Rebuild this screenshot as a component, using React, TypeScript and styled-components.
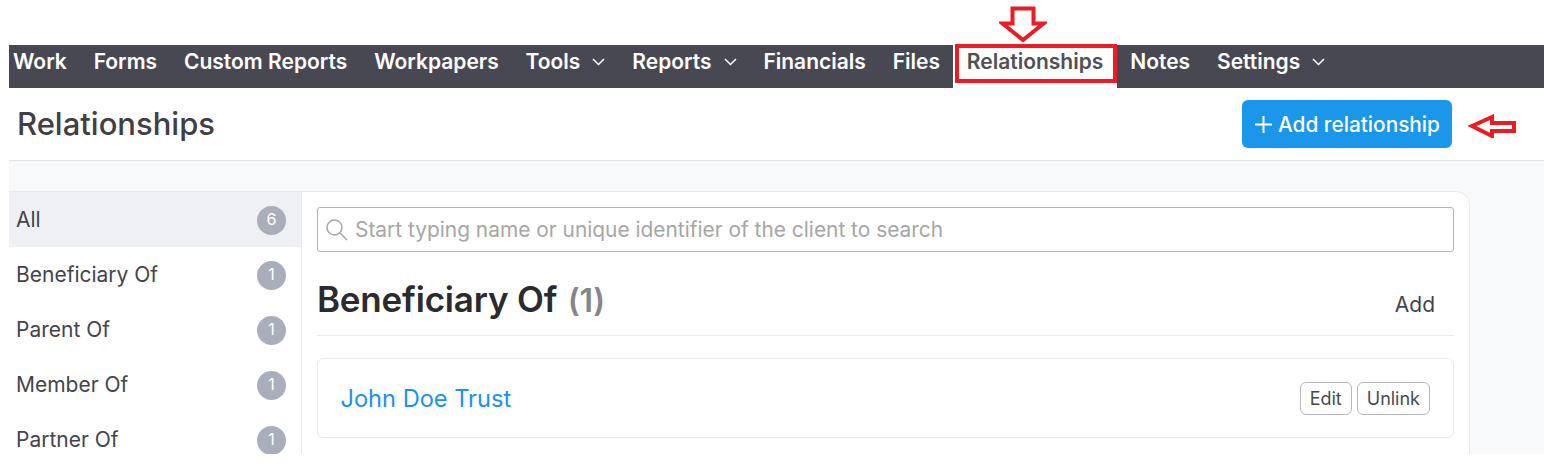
import styled, { createGlobalStyle } from 'styled-components';

const GlobalStyle = createGlobalStyle`
  html, body {
    margin: 0;
    padding: 0;
    background: #fff;
    font-family: Inter, "Liberation Sans", sans-serif;
  }
  * { box-sizing: border-box; }
`;

const Page = styled.div`
  position: relative;
  width: 1544px;
  height: 468px;
  padding: 45px 0 14px 9px;
  overflow: hidden;
  background: #fff;
  display: flex;
  flex-direction: column;
`;

const NavBar = styled.nav`
  display: flex;
  height: 43px;
  flex: none;
  background: #484852;
`;

const NavItem = styled.a<{ $active?: boolean }>`
  position: relative;
  display: flex;
  align-items: flex-start;
  gap: 12px;
  padding: 4px 13.45px 0;
  font-size: 21px;
  line-height: 26px;
  font-weight: 600;
  white-space: nowrap;
  color: ${(p) => (p.$active ? '#4f5058' : '#fff')};
  background: ${(p) => (p.$active ? '#fff' : 'transparent')};

  &:first-child {
    padding-left: 4px;
  }

  svg {
    margin-top: 9px;
  }
`;

const ActiveOutline = styled.span`
  position: absolute;
  left: 2px;
  right: 0;
  top: -1px;
  height: 39px;
  border: 4px solid #ed1c24;
`;

const PageHeader = styled.header`
  display: flex;
  flex: none;
  align-items: center;
  justify-content: space-between;
  height: 73px;
  padding: 0 92px 1px 8px;
  border-bottom: 1px solid #e1e3e8;
`;

const PageTitle = styled.h1`
  margin: 0 0 -1px;
  font-size: 31px;
  line-height: 36px;
  font-weight: 500;
  color: #404044;
`;

const PrimaryButton = styled.button`
  display: flex;
  align-items: center;
  gap: 6px;
  width: 210px;
  height: 48px;
  padding: 1px 0 0 13px;
  border: 0;
  border-radius: 6px;
  background: #1a96ea;
  color: #fff;
  font: 500 20.8px Inter, sans-serif;
`;

const Body = styled.div`
  flex: 1;
  min-height: 0;
  overflow: hidden;
  padding: 30px 74px 0 0;
  background: #f8f9fb;
  display: flex;
`;

const Sidebar = styled.aside`
  width: 293px;
  flex: none;
  background: #fff;
  border-top: 1px solid #e9eaed;
  border-right: 1px solid #e9eaed;
`;

const SideRow = styled.div<{ $selected?: boolean }>`
  display: flex;
  align-items: center;
  justify-content: space-between;
  height: 55px;
  padding: 1px 15px 0 7px;
  font-size: 21px;
  color: #44444c;
  background: ${(p) => (p.$selected ? '#eff0f4' : 'transparent')};

  span:first-child {
    margin-top: -1px;
  }
`;

const CountBadge = styled.span`
  display: flex;
  align-items: center;
  justify-content: center;
  width: 29px;
  height: 29px;
  border-radius: 50%;
  background: #a9aeba;
  color: #fff;
  font-size: 16px;
  padding-bottom: 2px;
`;

const MainPanel = styled.main`
  flex: 1;
  padding: 15px 15px 0;
  background: #fff;
  border: 1px solid #e9eaed;
  border-left: 0;
  border-bottom: 0;
  border-top-right-radius: 14px;
`;

const SearchBox = styled.label`
  display: flex;
  align-items: center;
  gap: 7px;
  height: 45px;
  padding: 0 7px;
  border: 1px solid #b4b4b4;
  border-radius: 3px;
  font-size: 20.9px;
  color: #a6a6a6;
  white-space: nowrap;
`;

const SectionHead = styled.div`
  display: flex;
  align-items: flex-end;
  justify-content: space-between;
  height: 84px;
  padding: 0 19px 12px 0;
  border-bottom: 1px solid #e9eaed;
`;

const SectionTitle = styled.h2`
  margin: 0;
  font-size: 35px;
  line-height: 44px;
  font-weight: 600;
  letter-spacing: -0.2px;
  color: #2b2b2f;

  small {
    margin-left: 2px;
    font-size: 32px;
    font-weight: 600;
    color: #85858c;
  }
`;

const AddLink = styled.a`
  margin-bottom: -1px;
  font-size: 21px;
  line-height: 38px;
  color: #44444c;
`;

const ClientCard = styled.div`
  display: flex;
  align-items: center;
  justify-content: space-between;
  height: 80px;
  margin-top: 22px;
  padding: 0 23px 0 22.5px;
  border: 1px solid #e9eaed;
  border-radius: 6px;
`;

const ClientLink = styled.a`
  font-size: 23.6px;
  color: #1a94ea;
`;

const ActionGroup = styled.div`
  display: flex;
  gap: 5px;
`;

const SmallButton = styled.button`
  height: 33px;
  padding: 0 9px;
  border: 1px solid #b9b9b9;
  border-radius: 6px;
  background: #fff;
  color: #4a4a52;
  font: 400 18px Inter, sans-serif;
`;

const Annotation = styled.svg<{ $left: number; $top: number }>`
  position: absolute;
  left: ${(p) => p.$left}px;
  top: ${(p) => p.$top}px;
`;

function Chevron() {
  return (
    <svg width="13" height="8" viewBox="0 0 13 8" fill="none">
      <path d="M1 1l5.5 5.5L12 1" stroke="#fff" strokeWidth="1.5" />
    </svg>
  );
}

const relations = [
  { name: 'All', count: 6 },
  { name: 'Beneficiary Of', count: 1 },
  { name: 'Parent Of', count: 1 },
  { name: 'Member Of', count: 1 },
  { name: 'Partner Of', count: 1 },
];

export default function App() {
  return (
    <Page>
      <GlobalStyle />
      <NavBar>
        <NavItem>Work</NavItem>
        <NavItem>Forms</NavItem>
        <NavItem>Custom Reports</NavItem>
        <NavItem>Workpapers</NavItem>
        <NavItem>
          Tools <Chevron />
        </NavItem>
        <NavItem>
          Reports <Chevron />
        </NavItem>
        <NavItem>Financials</NavItem>
        <NavItem>Files</NavItem>
        <NavItem $active>
          Relationships
          <ActiveOutline />
        </NavItem>
        <NavItem>Notes</NavItem>
        <NavItem>
          Settings <Chevron />
        </NavItem>
      </NavBar>

      <PageHeader>
        <PageTitle>Relationships</PageTitle>
        <PrimaryButton>
          <svg width="17" height="17" viewBox="0 0 17 17" fill="none">
            <path d="M8.5 0v17M0 8.5h17" stroke="#fff" strokeWidth="2" />
          </svg>
          Add relationship
        </PrimaryButton>
      </PageHeader>

      <Body>
        <Sidebar>
          {relations.map((item, i) => (
            <SideRow key={item.name} $selected={i === 0}>
              <span>{item.name}</span>
              <CountBadge>{item.count}</CountBadge>
            </SideRow>
          ))}
        </Sidebar>

        <MainPanel>
          <SearchBox>
            <svg width="23" height="23" viewBox="0 0 23 23" fill="none" stroke="#a6a6a6" strokeWidth="1.5">
              <circle cx="9.5" cy="9.5" r="7.5" />
              <path d="M15 15l7 7" />
            </svg>
            Start typing name or unique identifier of the client to search
          </SearchBox>

          <SectionHead>
            <SectionTitle>
              Beneficiary Of <small>(1)</small>
            </SectionTitle>
            <AddLink>Add</AddLink>
          </SectionHead>

          <ClientCard>
            <ClientLink>John Doe Trust</ClientLink>
            <ActionGroup>
              <SmallButton>Edit</SmallButton>
              <SmallButton>Unlink</SmallButton>
            </ActionGroup>
          </ClientCard>
        </MainPanel>
      </Body>

      {/* red arrows drawn on top of the screenshot */}
      <Annotation $left={999} $top={5} width="48" height="38" viewBox="0 0 48 38" fill="#fff">
        <path d="M13.5 3.5h21v15h10L24 35 3.5 18.5h10z" stroke="#ed1c24" strokeWidth="4" />
      </Annotation>
      <Annotation $left={1468} $top={114} width="48" height="24" viewBox="0 0 48 24" fill="#fff">
        <path d="M4 12l20-9v6h22v8H24v5z" stroke="#ed1c24" strokeWidth="4" />
      </Annotation>
    </Page>
  );
}
